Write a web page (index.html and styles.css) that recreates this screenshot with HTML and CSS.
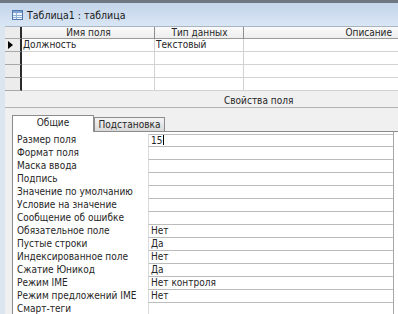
FILE: index.html
```html
<!DOCTYPE html>
<html lang="ru">
<head>
  <meta charset="UTF-8"/>
  <title>Таблица1 : таблица</title>
  <link rel="stylesheet" href="styles.css">
</head>
<body>
  <div class="window">
    <!-- Заголовок окна -->
    <div class="titlebar">
      <svg class="ticon" width="11" height="10" viewBox="0 0 11 10">
        <rect x="0.5" y="0.5" width="10" height="9" fill="#eef4fb" stroke="#4f78b0"/>
        <rect x="1" y="1" width="9" height="2" fill="#7ea3d4"/>
        <path d="M1 5.5H10M1 7.5H10M4.5 3V9" stroke="#8fb0d8" stroke-width="1"/>
      </svg>
      <span class="title">Таблица1 : таблица</span>
    </div>

    <div class="frame">
      <!-- Бланк полей -->
      <div class="grid">
        <div class="grow ghead">
          <div class="sel"></div>
          <div class="c1">Имя поля</div>
          <div class="c2">Тип данных</div>
          <div class="c3">Описание</div>
        </div>
        <div class="grow">
          <div class="sel"><span class="arrow"></span></div>
          <div class="c1">Должность</div>
          <div class="c2">Текстовый</div>
          <div class="c3"></div>
        </div>
        <div class="grow">
          <div class="sel"></div><div class="c1"></div><div class="c2"></div><div class="c3"></div>
        </div>
        <div class="grow">
          <div class="sel"></div><div class="c1"></div><div class="c2"></div><div class="c3"></div>
        </div>
        <div class="grow">
          <div class="sel"></div><div class="c1"></div><div class="c2"></div><div class="c3"></div>
        </div>
      </div>

      <div class="props-title">Свойства поля</div>

      <!-- Вкладки -->
      <div class="tabs">
        <div class="tab active">Общие</div>
        <div class="tab">Подстановка</div>
      </div>

      <div class="panel">
        <div class="plist">
          <div class="prow"><div class="plabel">Размер поля</div><div class="pval">15<span class="caret"></span></div></div>
          <div class="prow"><div class="plabel">Формат поля</div><div class="pval"></div></div>
          <div class="prow"><div class="plabel">Маска ввода</div><div class="pval"></div></div>
          <div class="prow"><div class="plabel">Подпись</div><div class="pval"></div></div>
          <div class="prow"><div class="plabel">Значение по умолчанию</div><div class="pval"></div></div>
          <div class="prow"><div class="plabel">Условие на значение</div><div class="pval"></div></div>
          <div class="prow"><div class="plabel">Сообщение об ошибке</div><div class="pval"></div></div>
          <div class="prow"><div class="plabel">Обязательное поле</div><div class="pval">Нет</div></div>
          <div class="prow"><div class="plabel">Пустые строки</div><div class="pval">Да</div></div>
          <div class="prow"><div class="plabel">Индексированное поле</div><div class="pval">Нет</div></div>
          <div class="prow"><div class="plabel">Сжатие Юникод</div><div class="pval">Да</div></div>
          <div class="prow"><div class="plabel">Режим IME</div><div class="pval">Нет контроля</div></div>
          <div class="prow"><div class="plabel">Режим предложений IME</div><div class="pval">Нет</div></div>
          <div class="prow"><div class="plabel">Смарт-теги</div><div class="pval"></div></div>
        </div>
      </div>
    </div>
  </div>
</body>
</html>
```

FILE: styles.css
```css
* { box-sizing: border-box; margin: 0; padding: 0; }
body { background: #fff; }

.window {
  width: 398px; height: 314px; overflow: hidden;
  background: #f0f0f0;
  font-family: "DejaVu Sans Condensed", "DejaVu Sans", sans-serif;
  font-stretch: condensed; font-size: 10px;
  color: #262626;
}

/* Заголовок */
.titlebar {
  height: 26px;
  border-top: 3px solid #6f7882;
  background: linear-gradient(#c3d5ea, #d9e6f4);
  display: flex; align-items: center;
  padding: 1px 0 0 12px;
}
.ticon { flex: 0 0 auto; margin-right: 4px; }
.title { font-size: 10.5px; color: #1b1b1b; }

.frame {
  border-left: 5px solid #dce6f0;
  height: 288px;
}

/* Бланк полей */
.grid { background: #fff; }
.grow {
  display: flex; height: 13px;
  line-height: 12px;
}
.grow > div { border-bottom: 1px solid #d2d2d2; white-space: nowrap; overflow: hidden; }
.sel {
  flex: 0 0 17px;
  background: #ececec;
  border-right: 2px solid #2b2b2b;
  border-bottom-color: #a9a9a9 !important;
  position: relative;
}
.c1 { flex: 0 0 133px; border-right: 1px solid #d2d2d2; padding-left: 1px; }
.c2 { flex: 0 0 89px; border-right: 1px solid #d2d2d2; padding-left: 1px; }
.c3 { flex: 1 1 auto; }

.ghead { border-top: 1px solid #a8b4c2; height: 13px; }
.ghead > div {
  background: linear-gradient(#fafafa, #eeeeee);
  border-bottom-color: #9a9a9a;
  text-align: center; line-height: 11px;
}
.ghead .c1, .ghead .c2 { border-right-color: #8e8e8e; }
.ghead .c3 { text-align: right; padding-right: 6px; }
.ghead .sel { background: #ececec; }

.arrow {
  position: absolute; left: 3px; top: 2px;
  border-left: 5px solid #000;
  border-top: 4px solid transparent;
  border-bottom: 4px solid transparent;
}

/* Свойства поля */
.props-title {
  height: 17px;
  padding: 4px 0 0 219px;
  line-height: 12px;
  border-bottom: 1px solid #b4b4b4;
}

.tabs {
  display: flex; align-items: flex-end;
  margin: 7px 0 0 7px;
  height: 16px;
  position: relative; z-index: 1;
}
.tab {
  width: 71px; height: 14px;
  border: 1px solid #8c8c8c; border-bottom: none;
  background: linear-gradient(#f4f4f4, #d9d9d9);
  text-align: center; line-height: 13px;
}
.tab.active {
  width: 82px; height: 17px;
  background: #fff;
  line-height: 14px;
  margin-bottom: -1px;
}

.panel {
  height: 200px;
  margin-left: 7px;
  padding-right: 4px;
  background: #fff;
  border-top: 1px solid #8c8c8c;
  border-left: 1px solid #8c8c8c;
}
.plist {
  height: 100%;
  padding-top: 2px;
  border-right: 1px solid #a8a8a8;
}
.prow {
  display: grid; grid-template-columns: 135px 1fr;
  height: 13px; line-height: 12px;
}
.plabel { padding-left: 4px; white-space: nowrap; }
.pval {
  border-left: 1px solid #dadada;
  border-bottom: 1px solid #bcbcbc;
  padding-left: 2px;
  white-space: nowrap;
}
.prow:first-child .pval { border-top: 1px solid #bcbcbc; line-height: 11px; }
.caret {
  display: inline-block; width: 1px; height: 10px;
  background: #000; vertical-align: -1px; margin-left: 1px;
}
```
